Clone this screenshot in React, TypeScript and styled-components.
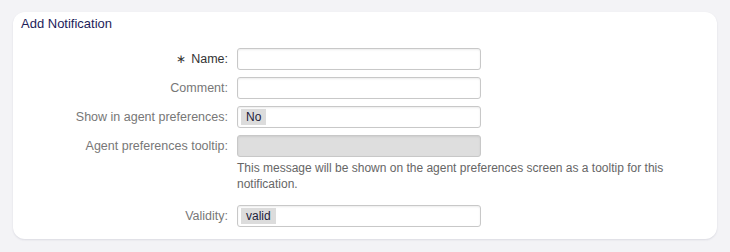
import React from "react";
import styled, { createGlobalStyle } from "styled-components";

const Global = createGlobalStyle`
  html, body { margin: 0; padding: 0; background: #f3f3f6; }
  body { font-family: "Liberation Sans", Arial, sans-serif; }
`;

const Page = styled.div`
  width: 730px;
  height: 252px;
  box-sizing: border-box;
  padding: 12px 13px 0 13px;
  background: #f3f3f6;
`;

const Card = styled.section`
  background: #ffffff;
  border-radius: 12px;
  box-shadow: 0 1px 2px rgba(40, 40, 80, 0.12);
  height: 227px;
  box-sizing: border-box;
  padding: 4px 0 0 0;
`;

const Title = styled.h2`
  margin: 0;
  padding-left: 8px;
  font-size: 13px;
  line-height: 16px;
  font-weight: normal;
  color: #1d1d5a;
`;

const Form = styled.div`
  display: grid;
  grid-template-columns: 215px 1fr;
  column-gap: 9px;
  row-gap: 7px;
  margin-top: 16px;
  align-items: start;
`;

const Label = styled.label<{ $required?: boolean }>`
  text-align: right;
  font-size: 12.5px;
  line-height: 22px;
  color: ${(p) => (p.$required ? "#333" : "#777")};
`;

const Star = styled.span`
  font-size: 12px;
  color: #333;
  margin-right: 5px;
`;

const Field = styled.div`
  display: flex;
  flex-direction: column;
`;

const Input = styled.div<{ $disabled?: boolean }>`
  width: 244px;
  height: 22px;
  box-sizing: border-box;
  border: 1px solid #c8c8c8;
  border-radius: 3px;
  background: ${(p) => (p.$disabled ? "#dedede" : "#fff")};
  box-shadow: inset 0 1px 2px rgba(0, 0, 0, 0.08);
  display: flex;
  align-items: center;
  padding-left: 3px;
`;

const Chip = styled.span`
  background: #dcdcdc;
  color: #1d1d3a;
  font-size: 12px;
  line-height: 16px;
  padding: 0 5px;
`;

const Desc = styled.p`
  margin: 3px 0 6px 0;
  max-width: 440px;
  font-size: 12px;
  line-height: 16px;
  color: #666;
`;

export default function App() {
  return (
    <>
      <Global />
      <Page>
        <Card>
          <Title>Add Notification</Title>
          <Form>
            <Label $required>
              <Star>∗</Star>Name:
            </Label>
            <Field>
              <Input />
            </Field>
            <Label>Comment:</Label>
            <Field>
              <Input />
            </Field>
            <Label>Show in agent preferences:</Label>
            <Field>
              <Input>
                <Chip>No</Chip>
              </Input>
            </Field>
            <Label>Agent preferences tooltip:</Label>
            <Field>
              <Input $disabled />
              <Desc>
                This message will be shown on the agent preferences screen as a
                tooltip for this notification.
              </Desc>
            </Field>
            <Label>Validity:</Label>
            <Field>
              <Input>
                <Chip>valid</Chip>
              </Input>
            </Field>
          </Form>
        </Card>
      </Page>
    </>
  );
}
